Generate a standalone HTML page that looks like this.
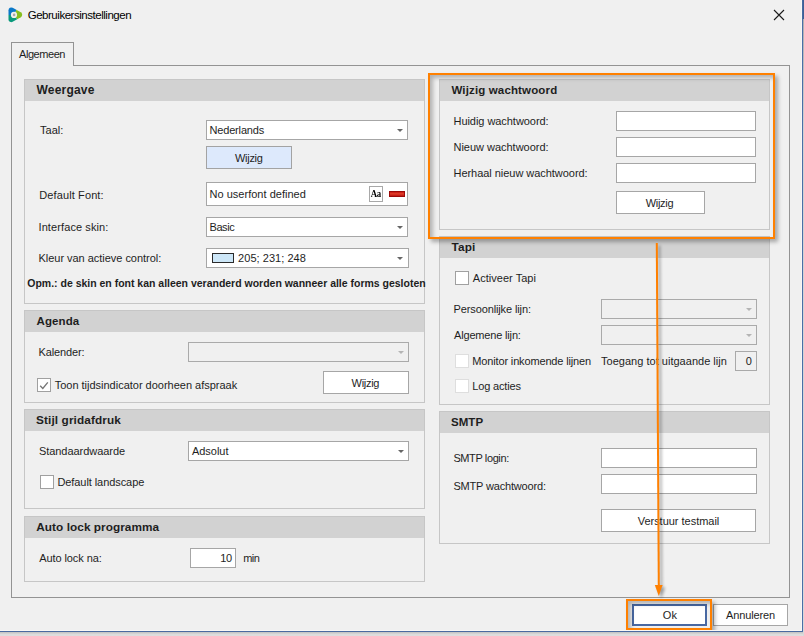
<!DOCTYPE html>
<html lang="nl">
<head>
<meta charset="utf-8">
<title>Gebruikersinstellingen</title>
<style>
html,body{margin:0;padding:0;}
body{width:804px;height:636px;overflow:hidden;background:#f0f0f0;position:relative;
  font-family:"Liberation Sans",sans-serif;font-size:11px;color:#1e1e1e;}
*{box-sizing:border-box;}
.abs{position:absolute;}
.t{position:absolute;white-space:nowrap;line-height:14px;height:14px;}
.b{font-weight:bold;}
.grp{position:absolute;border:1px solid #c6c6c6;background:#f0f0f0;}
.hdr{position:absolute;left:0;top:0;right:0;height:21px;background:#d2d2d2;}
.inp{position:absolute;background:#fff;border:1px solid #a6a6a6;}
.dis{background:#f0f0f0;border-color:#aaaaaa;}
.arr{position:absolute;width:0;height:0;border-left:3.5px solid transparent;border-right:3.5px solid transparent;border-top:3.5px solid #666;}
.arr.g{border-top-color:#b4b4b4;}
.cb{position:absolute;width:14px;height:14px;background:#fff;border:1px solid #a0a0a0;}
.cb.d{border-color:#dedede;}
</style>
</head>
<body>

<!-- title bar -->
<svg class="abs" style="left:0;top:0" width="30" height="30" viewBox="0 0 30 30">
  <defs><clipPath id="tri"><path d="M8.50 10.20 A2.8 2.8 0 0 1 12.68 7.77 L20.78 12.37 A2.8 2.8 0 0 1 20.78 17.23 L12.68 21.83 A2.8 2.8 0 0 1 8.50 19.40 Z"/></clipPath></defs>
  <g clip-path="url(#tri)">
    <path d="M14 14.9 L0 15.4 L0 0 L18.4 0 L16.6 9.4 Z" fill="#0a78c8"/>
    <path d="M14 14.9 L16.6 9.4 L18.4 0 L30 0 L30 30 L19 27 L17.4 19.4 Z" fill="#86bf20"/>
    <path d="M14 14.9 L17.4 19.4 L19 27 L0 30 L0 15.4 Z" fill="#0a9a7c"/>
  </g>
  <circle cx="14" cy="14.9" r="3.1" fill="#f2efee"/>
  <circle cx="14.1" cy="14.9" r="1.3" fill="#a9a9a9"/>
</svg>
<svg class="abs" style="left:773px;top:9px" width="12" height="12" viewBox="0 0 12 12">
  <path d="M1 1 L11 11 M11 1 L1 11" stroke="#1a1a1a" stroke-width="1.1" fill="none"/>
</svg>

<!-- tab page frame -->
<div class="abs" style="left:11px;top:65px;width:779px;height:533px;border:1px solid #939393;"></div>
<!-- tab -->
<div class="abs" style="left:11px;top:42px;width:63px;height:24px;border:1px solid #939393;border-bottom:none;background:#f0f0f0;"></div>

<!-- groups -->
<div class="grp" style="left:24px;top:79px;width:401px;height:225px"><div class="hdr"></div></div>
<div class="grp" style="left:24px;top:310px;width:401px;height:93px"><div class="hdr"></div></div>
<div class="grp" style="left:24px;top:409px;width:401px;height:100px"><div class="hdr"></div></div>
<div class="grp" style="left:24px;top:516px;width:401px;height:66px"><div class="hdr"></div></div>
<div class="grp" style="left:439px;top:79px;width:331px;height:151px"><div class="hdr"></div></div>
<div class="grp" style="left:439px;top:236px;width:331px;height:169px"><div class="hdr"></div></div>
<div class="grp" style="left:439px;top:411px;width:331px;height:133px"><div class="hdr"></div></div>

<!-- Weergave controls -->
<div class="inp" style="left:206px;top:120px;width:202px;height:20px"></div><div class="arr" style="left:396.5px;top:129px"></div>
<div class="inp" style="left:206px;top:146px;width:86px;height:23px;background:#dde9fc;border-color:#a3a3a3"></div>
<div class="inp" style="left:206px;top:182px;width:202px;height:24px"></div>
<div class="abs" style="left:369px;top:186px;width:14px;height:16px;border:1px solid #a8a8a8;background:#fff;font-family:'Liberation Serif',serif;font-weight:bold;font-size:10px;line-height:14px;text-align:center;color:#000;overflow:hidden"><span style="display:inline-block;transform:scaleX(0.88);transform-origin:50% 50%;letter-spacing:-0.3px;margin-left:-2px;margin-right:-2px">Aa</span></div>
<div class="abs" style="left:389px;top:191px;width:16px;height:6px;background:linear-gradient(#c41612,#e03c28 40%,#dc3826 55%,#bc1410);border:1px solid #9c0a08"></div>
<div class="inp" style="left:206px;top:217px;width:202px;height:20px"></div><div class="arr" style="left:396.5px;top:226px"></div>
<div class="inp" style="left:206px;top:248px;width:203px;height:20px"></div><div class="arr" style="left:396.5px;top:257px"></div>
<div class="abs" style="left:212px;top:253px;width:22px;height:10px;background:#cde7f8;border:1px solid #2b2b2b"></div>

<!-- Agenda controls -->
<div class="inp dis" style="left:188px;top:342px;width:221px;height:20px"></div><div class="arr g" style="left:397.5px;top:351px"></div>
<div class="cb" style="left:37px;top:378px"></div>
<svg class="abs" style="left:37px;top:378px" width="14" height="14" viewBox="0 0 14 14"><path d="M3.2 7.8 L5.8 10.4 L10.8 4.4" stroke="#757575" stroke-width="1.35" fill="none"/></svg>
<div class="inp" style="left:323px;top:371px;width:86px;height:23px"></div>

<!-- Stijl controls -->
<div class="inp" style="left:188px;top:441px;width:221px;height:20px"></div><div class="arr" style="left:397.5px;top:450px"></div>
<div class="cb" style="left:40px;top:475px"></div>

<!-- Auto lock -->
<div class="inp" style="left:190px;top:548px;width:46px;height:20px"></div>

<!-- Wijzig wachtwoord controls -->
<div class="inp" style="left:616px;top:111px;width:140px;height:20px"></div>
<div class="inp" style="left:616px;top:137px;width:140px;height:20px"></div>
<div class="inp" style="left:616px;top:163px;width:140px;height:20px"></div>
<div class="inp" style="left:616px;top:191px;width:89px;height:23px"></div>

<!-- Tapi controls -->
<div class="cb" style="left:455px;top:271px"></div>
<div class="inp dis" style="left:601px;top:299px;width:156px;height:20px"></div><div class="arr g" style="left:745.5px;top:308px"></div>
<div class="inp dis" style="left:601px;top:325px;width:156px;height:20px"></div><div class="arr g" style="left:745.5px;top:334px"></div>
<div class="cb d" style="left:455px;top:354px"></div>
<div class="cb d" style="left:455px;top:379px"></div>
<div class="inp dis" style="left:735px;top:351px;width:22px;height:20px;border-color:#a9a9a9"></div>

<!-- SMTP controls -->
<div class="inp" style="left:601px;top:448px;width:156px;height:20px"></div>
<div class="inp" style="left:601px;top:474px;width:156px;height:20px"></div>
<div class="inp" style="left:601px;top:509px;width:155px;height:23px"></div>

<!-- bottom buttons -->
<div class="inp" style="left:632px;top:604px;width:75px;height:22px;border:2px solid #4868a2"></div>
<div class="inp" style="left:713px;top:604px;width:75px;height:22px"></div>

<div class="t" style="left:27.7px;top:8.0px;font-size:11.5px;color:#000;letter-spacing:-0.47px;">Gebruikersinstellingen</div>
<div class="t" style="left:19.0px;top:47.2px;letter-spacing:-0.44px;">Algemeen</div>
<div class="t b" style="left:36.5px;top:82.8px;font-size:12px;letter-spacing:0.20px;">Weergave</div>
<div class="t b" style="left:36.5px;top:314.0px;font-size:11.5px;letter-spacing:0.10px;">Agenda</div>
<div class="t b" style="left:36.0px;top:412.9px;font-size:11.8px;letter-spacing:0.11px;">Stijl gridafdruk</div>
<div class="t b" style="left:36.3px;top:519.9px;font-size:11.8px;letter-spacing:0.05px;">Auto lock programma</div>
<div class="t b" style="left:451.4px;top:83.0px;font-size:11.5px;letter-spacing:0.15px;">Wijzig wachtwoord</div>
<div class="t b" style="left:451.4px;top:239.9px;font-size:11.8px;letter-spacing:0.21px;">Tapi</div>
<div class="t b" style="left:451.0px;top:415.0px;font-size:11.5px;letter-spacing:0.06px;">SMTP</div>
<div class="t" style="left:40.0px;top:123.2px;letter-spacing:0.03px;">Taal:</div>
<div class="t" style="left:39.3px;top:188.2px;letter-spacing:0.11px;">Default Font:</div>
<div class="t" style="left:38.5px;top:220.2px;letter-spacing:0.10px;">Interface skin:</div>
<div class="t" style="left:38.5px;top:251.2px;letter-spacing:-0.03px;">Kleur van actieve control:</div>
<div class="t b" style="left:27.3px;top:276.4px;font-size:10.5px;letter-spacing:-0.01px;">Opm.: de skin en font kan alleen veranderd worden wanneer alle forms gesloten</div>
<div class="t" style="left:209.5px;top:123.2px;letter-spacing:-0.17px;">Nederlands</div>
<div class="t" style="left:235.0px;top:151.2px;letter-spacing:-0.29px;">Wijzig</div>
<div class="t" style="left:209.5px;top:187.2px;letter-spacing:0.02px;">No userfont defined</div>
<div class="t" style="left:209.5px;top:220.2px;letter-spacing:-0.44px;">Basic</div>
<div class="t" style="left:238.1px;top:251.2px;letter-spacing:0.04px;">205; 231; 248</div>
<div class="t" style="left:38.5px;top:345.2px;letter-spacing:-0.14px;">Kalender:</div>
<div class="t" style="left:54.7px;top:378.2px;letter-spacing:-0.01px;">Toon tijdsindicator doorheen afspraak</div>
<div class="t" style="left:351.6px;top:376.2px;letter-spacing:-0.29px;">Wijzig</div>
<div class="t" style="left:38.9px;top:444.2px;letter-spacing:-0.04px;">Standaardwaarde</div>
<div class="t" style="left:192.0px;top:444.2px;letter-spacing:-0.04px;">Adsolut</div>
<div class="t" style="left:57.4px;top:475.2px;letter-spacing:-0.07px;">Default landscape</div>
<div class="t" style="left:39.2px;top:551.2px;letter-spacing:-0.08px;">Auto lock na:</div>
<div class="t" style="left:220.3px;top:551.2px;letter-spacing:-0.47px;">10</div>
<div class="t" style="left:243.2px;top:551.2px;letter-spacing:-0.58px;">min</div>
<div class="t" style="left:453.5px;top:114.2px;letter-spacing:-0.05px;">Huidig wachtwoord:</div>
<div class="t" style="left:453.5px;top:140.2px;letter-spacing:-0.02px;">Nieuw wachtwoord:</div>
<div class="t" style="left:453.5px;top:166.2px;letter-spacing:-0.04px;">Herhaal nieuw wachtwoord:</div>
<div class="t" style="left:645.7px;top:196.2px;letter-spacing:-0.29px;">Wijzig</div>
<div class="t" style="left:472.8px;top:271.2px;letter-spacing:0.03px;">Activeer Tapi</div>
<div class="t" style="left:453.5px;top:302.2px;letter-spacing:-0.12px;">Persoonlijke lijn:</div>
<div class="t" style="left:454.0px;top:328.2px;letter-spacing:-0.17px;">Algemene lijn:</div>
<div class="t" style="left:472.3px;top:354.2px;letter-spacing:-0.15px;">Monitor inkomende lijnen</div>
<div class="t" style="left:601.0px;top:354.2px;letter-spacing:0.02px;">Toegang tot uitgaande lijn</div>
<div class="t" style="left:745.8px;top:354.2px;letter-spacing:0.17px;">0</div>
<div class="t" style="left:472.3px;top:379.2px;letter-spacing:-0.16px;">Log acties</div>
<div class="t" style="left:453.4px;top:451.2px;letter-spacing:-0.39px;">SMTP login:</div>
<div class="t" style="left:453.4px;top:479.2px;letter-spacing:-0.17px;">SMTP wachtwoord:</div>
<div class="t" style="left:637.7px;top:514.2px;letter-spacing:-0.02px;">Verstuur testmail</div>
<div class="t" style="left:662.8px;top:608.2px;letter-spacing:0.07px;">Ok</div>
<div class="t" style="left:726.0px;top:608.2px;letter-spacing:-0.13px;">Annuleren</div>

<!-- annotations -->
<div class="abs" style="left:428px;top:73px;width:347px;height:166px;border:2px solid #ff8000;box-shadow:3px 3px 4px rgba(0,0,0,0.3), inset 3px 3px 4px rgba(0,0,0,0.26)"></div>
<svg class="abs" style="left:640px;top:238px;overflow:visible" width="40" height="364" viewBox="0 0 40 364">
  <g transform="translate(2.5,2.5)" opacity="0.35" style="filter:blur(1.5px)">
    <path d="M16.8 5 L18.8 348" stroke="#000" stroke-width="2" fill="none"/>
    <path d="M14.8 347 L22.6 347 L18.8 358 Z" fill="#000"/>
  </g>
  <path d="M16.8 5 L18.8 348" stroke="#ff8000" stroke-width="2" fill="none"/>
  <path d="M14.8 347 L22.6 347 L18.8 358 Z" fill="#ff8000"/>
</svg>
<div class="abs" style="left:626px;top:599px;width:86px;height:31px;border:2px solid #ff8000;box-shadow:3px 3px 4px rgba(0,0,0,0.3), inset 3px 3px 4px rgba(0,0,0,0.26)"></div>

<!-- window border -->
<div class="abs" style="left:0;top:630px;width:802px;height:1px;background:#f9f8f5"></div>
<div class="abs" style="left:801px;top:0;width:1px;height:631px;background:#f8f6f4"></div>
<div class="abs" style="left:0;top:631px;width:803px;height:1px;background:#4a6aa0"></div>
<div class="abs" style="left:802px;top:0;width:1px;height:632px;background:#4a6ea8"></div>
<div class="abs" style="left:0;top:632px;width:804px;height:4px;background:linear-gradient(#c2c0be,#cfcfcf 30%,#dcdcdc 60%,#dedede)"></div>
<div class="abs" style="left:803px;top:0;width:1px;height:636px;background:linear-gradient(#a8a8a8,#d0d0d0 20%,#d8d8d8)"></div>
<div class="abs" style="left:802px;top:0;width:2px;height:19px;background:linear-gradient(90deg,#4a70a8,#3d5a8e)"></div>

</body>
</html>
